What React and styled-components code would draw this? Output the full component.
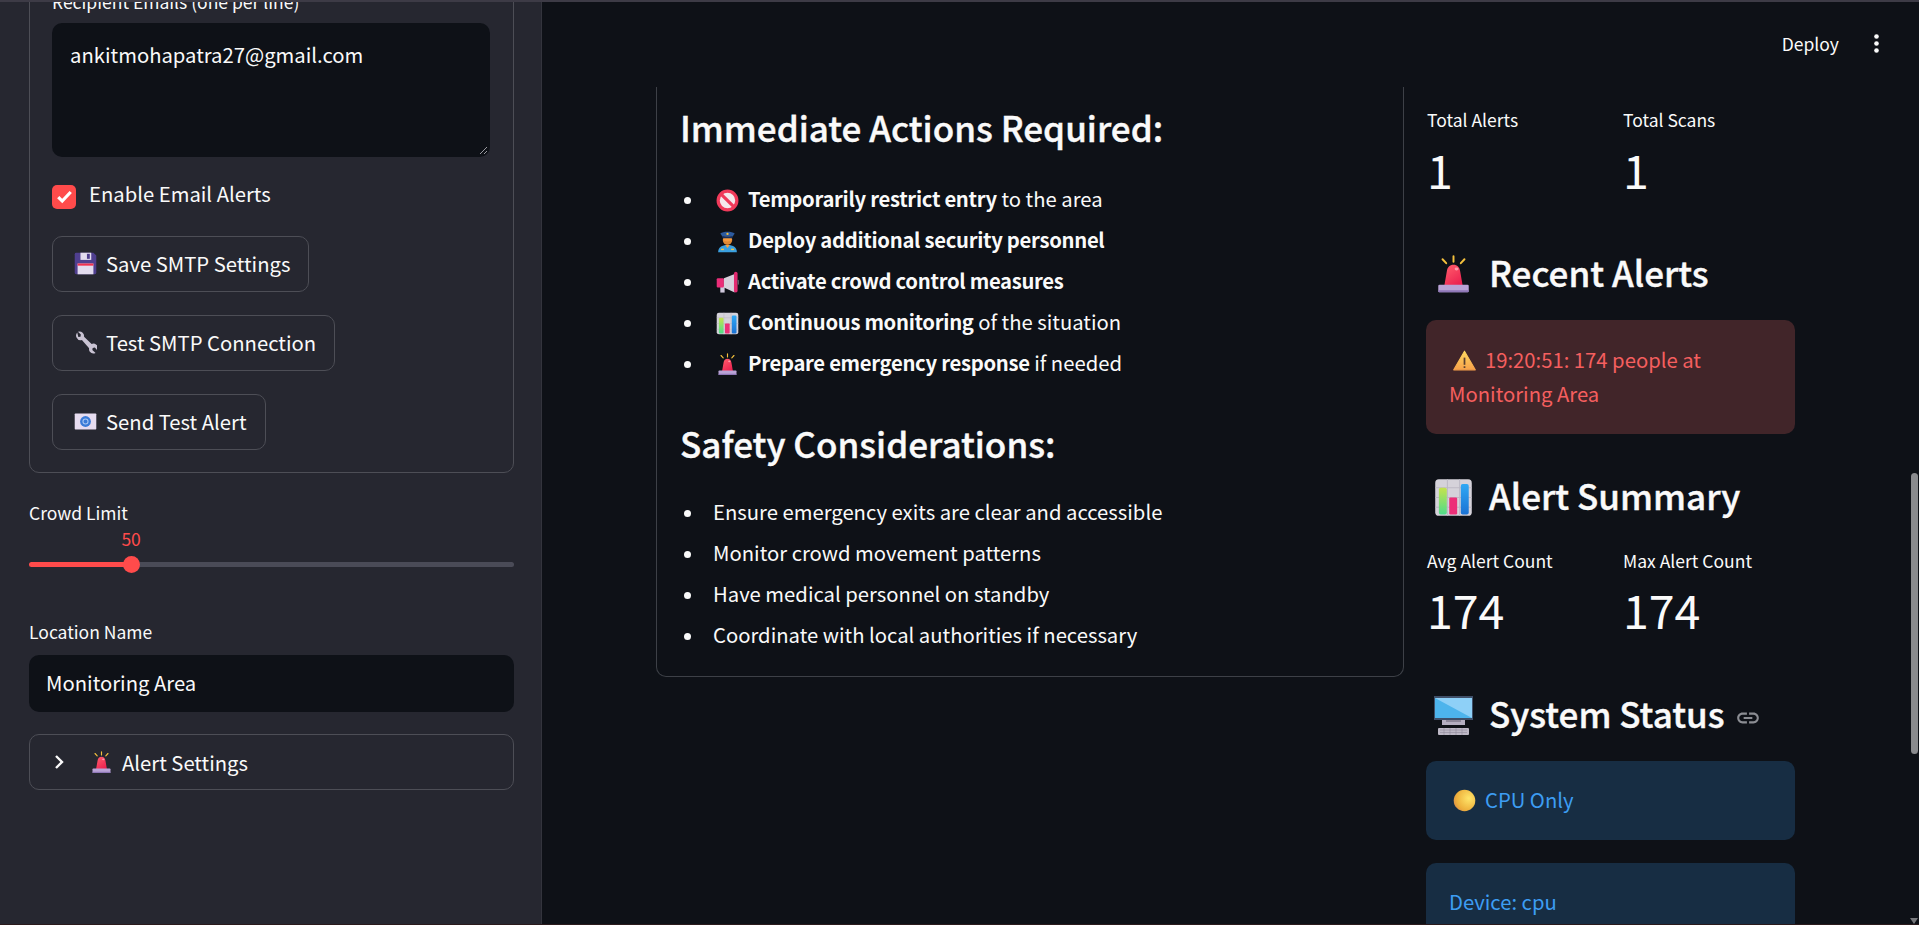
import React from 'react'
import styled, { createGlobalStyle } from 'styled-components'

const GlobalStyle = createGlobalStyle`
  html, body {
    margin: 0;
    padding: 0;
    height: 100%;
    overflow: hidden;
    background: #0e1117;
  }
  body {
    font-family: "Noto Sans CJK SC", "Noto Sans", sans-serif;
    color: #fafafa;
    font-size: 20.25px;
  }
`

const Page = styled.div`
  width: 1919px;
  height: 925px;
  display: flex;
  flex-direction: column;
  overflow: hidden;
`

const TopLine = styled.div`
  height: 2px;
  flex: none;
  background: #3d3b46;
`

const BottomLine = styled.div`
  height: 1px;
  flex: none;
  background: #2b1a1c;
`

const Body = styled.div`
  flex: 1;
  min-height: 0;
  display: flex;
`

/* sidebar */
const Sidebar = styled.aside`
  width: 542px;
  flex: none;
  box-sizing: border-box;
  padding: 0 27px 0 29px;
  background: #262730;
  border-right: 1px solid #33343d;
  overflow: hidden;
  display: flex;
  flex-direction: column;
`

const Panel = styled.div`
  margin-top: -15px;
  box-sizing: border-box;
  height: 486px;
  padding: 0 23px 0 22px;
  border: 1px solid #4d4e56;
  border-radius: 10px;
  display: flex;
  flex-direction: column;
  align-items: flex-start;
`

const FieldLabel = styled.div`
  font-size: 17.5px;
  line-height: 28px;
  height: 28px;
  margin-top: ${p => p.$top || 0}px;
  white-space: nowrap;
`

const TextArea = styled.div`
  position: relative;
  align-self: stretch;
  box-sizing: border-box;
  height: 134px;
  margin-top: 7px;
  padding: 16px 18px;
  background: #0e1117;
  border-radius: 10px;
  line-height: 32px;
`

const ResizeGrip = styled.svg`
  position: absolute;
  right: 2px;
  bottom: 2px;
  width: 9px;
  height: 9px;
`

const CheckRow = styled.div`
  margin-top: 28px;
  height: 23px;
  display: flex;
  align-items: center;
  gap: 13px;
`

const CheckBox = styled.span`
  width: 24px;
  height: 24px;
  border-radius: 5px;
  background: #ff4b4b;
  display: flex;
  align-items: center;
  justify-content: center;
`

const CheckText = styled.span`
  margin-top: -6px;
`

const Button = styled.div`
  box-sizing: border-box;
  height: 56px;
  margin-top: ${p => p.$top}px;
  padding: 0 18px 2px 21px;
  display: inline-flex;
  align-items: center;
  background: #262730;
  border: 1px solid #4d4e56;
  border-radius: 10px;
  white-space: nowrap;
`

const SliderBox = styled.div`
  position: relative;
  height: 50px;
`

const SliderValue = styled.span`
  position: absolute;
  top: 0;
  left: ${p => p.$pct}%;
  transform: translateX(-50%);
  font-size: 17.5px;
  line-height: 24px;
  color: #ff4b4b;
`

const SliderTrack = styled.div`
  position: absolute;
  left: 0;
  right: 0;
  top: 35px;
  height: 5px;
  border-radius: 3px;
  background: linear-gradient(to right, #ff4b4b ${p => p.$pct}%, #4a4b57 ${p => p.$pct}%);
`

const SliderThumb = styled.span`
  position: absolute;
  top: 29px;
  left: ${p => p.$pct}%;
  width: 17px;
  height: 17px;
  margin-left: -8px;
  border-radius: 50%;
  background: #ff4b4b;
`

const TextInput = styled.div`
  box-sizing: border-box;
  height: 57px;
  margin-top: 9px;
  padding: 0 17px 2px;
  display: flex;
  align-items: center;
  background: #0e1117;
  border-radius: 10px;
`

const Expander = styled.div`
  box-sizing: border-box;
  height: 56px;
  margin-top: 22px;
  padding: 0 20px;
  display: flex;
  align-items: center;
  border: 1px solid #4d4e56;
  border-radius: 10px;
`

const Chevron = styled.svg`
  width: 18px;
  height: 18px;
  margin-right: 22px;
`

/* main area */
const Main = styled.main`
  position: relative;
  flex: 1;
  min-width: 0;
  background: #0e1117;
  overflow: hidden;
  display: flex;
  flex-direction: column;
`

const Header = styled.header`
  box-sizing: border-box;
  height: 85px;
  flex: none;
  display: flex;
  align-items: center;
  justify-content: flex-end;
  padding: 0 40px 2px 0;
  gap: 35px;
  font-size: 17.5px;
`

const Kebab = styled.svg`
  width: 5px;
  height: 19px;
`

const Columns = styled.div`
  flex: 1;
  min-height: 0;
  display: flex;
  align-items: flex-start;
  gap: 22px;
  padding-left: 114px;
`

const Card = styled.section`
  box-sizing: border-box;
  width: 748px;
  height: 590px;
  padding: 14px 23px 0;
  border: 1px solid #3d4047;
  border-top: none;
  border-radius: 0 0 10px 10px;
`

const CardTitle = styled.h3`
  margin: ${p => p.$top || 0}px 0 0;
  font-size: 35px;
  line-height: 52px;
  font-weight: 500;
  -webkit-text-stroke: 0.4px #fafafa;
  white-space: nowrap;
`

const BulletList = styled.ul`
  margin: ${p => p.$top}px 0 0;
  padding: 0 0 0 4px;
  list-style: none;
`

const BulletItem = styled.li`
  line-height: 32px;
  height: 32px;
  margin-bottom: ${p => p.$gap}px;
  white-space: nowrap;
  strong {
    font-weight: 600;
    letter-spacing: -0.3px;
  }
  &::before {
    content: '';
    display: inline-block;
    width: 7px;
    height: 7px;
    margin-right: 22px;
    border-radius: 50%;
    background: #fafafa;
    vertical-align: 3px;
  }
`

const InlineEmoji = styled.span`
  display: inline-block;
  width: 23px;
  height: 23px;
  margin-right: 9px;
  vertical-align: -5px;
  svg {
    display: block;
    width: 100%;
    height: 100%;
  }
`

const LeadEmoji = styled(InlineEmoji)`
  margin-left: 3px;
`

const SideColumn = styled.section`
  width: 369px;
  flex: none;
`

const MetricRow = styled.div`
  display: grid;
  grid-template-columns: 196px 173px;
  padding: ${p => p.$top}px 0 0 1px;
`

const MetricLabel = styled.div`
  font-size: 17.5px;
  line-height: 28px;
  white-space: nowrap;
`

const MetricValue = styled.div`
  margin-top: ${p => p.$top}px;
  font-size: 46.5px;
  line-height: 56px;
  font-weight: 400;
`

const SectionHeading = styled.h2`
  margin: ${p => p.$top}px 0 0;
  box-sizing: border-box;
  height: 56px;
  display: flex;
  align-items: center;
  padding-left: 8px;
  font-size: 35px;
  font-weight: 500;
  -webkit-text-stroke: 0.4px #fafafa;
  white-space: nowrap;
  svg.emoji {
    width: 39px;
    height: 39px;
    margin-right: 16px;
    flex: none;
  }
`

const HeadingText = styled.span`
  margin-top: -5px;
`

const LinkIcon = styled.svg`
  width: 26px;
  height: 26px;
  margin: 6px 0 0 10px;
  fill: #8b8d93;
  -webkit-text-stroke: 0;
`

const Notice = styled.div`
  box-sizing: border-box;
  height: ${p => p.$height}px;
  margin-top: ${p => p.$top}px;
  padding: ${p => p.$pad}px 23px 0;
  border-radius: 10px;
  line-height: 34px;
  background: ${p => (p.$tone === 'error' ? '#412529' : '#172d43')};
  color: ${p => (p.$tone === 'error' ? '#f55f5f' : '#3d9df3')};
  ${InlineEmoji} {
    margin: 0 9px 0 4px;
    vertical-align: -4px;
  }
`

const ScrollBar = styled.div`
  position: absolute;
  top: 0;
  right: 0;
  bottom: 0;
  width: 9px;
`

const ScrollThumb = styled.div`
  position: absolute;
  top: 471px;
  left: 1px;
  width: 7px;
  height: 281px;
  border-radius: 4px;
  background: #8a8b8e;
`

const ScrollArrow = styled.div`
  position: absolute;
  bottom: 0;
  left: 0;
  border-left: 4.500px solid transparent;
  border-right: 4.500px solid transparent;
  border-top: 6px solid #77787c;
`

/* emoji drawings */
const Siren = ({ className }) => (
  <svg className={className} viewBox="0 0 32 32">
    <defs>
      <linearGradient id="sirenDome" x1="0.2" y1="0" x2="0.8" y2="1">
        <stop offset="0" stopColor="#ff5a6a" />
        <stop offset="1" stopColor="#ea1f4f" />
      </linearGradient>
    </defs>
    <path d="M16 1v4.500M7 3.500l3 3.200M25 3.500l-3 3.200" stroke="#f4c13d" strokeWidth="1.600" strokeLinecap="round" fill="none" />
    <path d="M8.500 25l2-11.500C11 10 13 8 16 8s5 2 5.500 5.500l2 11.500z" fill="url(#sirenDome)" />
    <ellipse cx="18.500" cy="11.500" rx="1.600" ry="1.200" fill="#ff9aa8" />
    <rect x="3.500" y="24.500" width="25" height="6" rx="1" fill="#b9a3d6" />
    <rect x="3.500" y="29" width="25" height="1.500" rx="0.700" fill="#8f78b8" />
  </svg>
)

const BarChart = ({ className }) => (
  <svg className={className} viewBox="0 0 32 32">
    <defs>
      <linearGradient id="barGreen" x1="0" y1="0" x2="0" y2="1">
        <stop offset="0" stopColor="#c5e24e" />
        <stop offset="1" stopColor="#4fdc8a" />
      </linearGradient>
      <linearGradient id="barBlue" x1="0" y1="0" x2="0" y2="1">
        <stop offset="0" stopColor="#2fa8f4" />
        <stop offset="1" stopColor="#1a72d4" />
      </linearGradient>
    </defs>
    <rect x="1" y="1" width="30" height="30" rx="3" fill="#d5d2da" />
    <path d="M11 1v30M21 1v30M1 8h30M1 16h30M1 24h30" stroke="#bcb8c4" strokeWidth="0.800" />
    <rect x="4" y="8" width="6.500" height="22" rx="1.500" fill="url(#barGreen)" />
    <rect x="12.500" y="16" width="6.500" height="14" rx="1" fill="#ec2f78" />
    <rect x="22" y="5" width="6.500" height="25" rx="1.500" fill="url(#barBlue)" />
  </svg>
)

const NoEntry = () => (
  <svg viewBox="0 0 32 32">
    <circle cx="16" cy="16" r="13" fill="#f5e8ec" stroke="#f03a5a" strokeWidth="4.500" />
    <path d="M7 7l18 18" stroke="#f03a5a" strokeWidth="4.500" />
  </svg>
)

const Police = () => (
  <svg viewBox="0 0 32 32">
    <path d="M3 31c0-7 5-10 13-10s13 3 13 10z" fill="#3aa0e0" />
    <path d="M13 21l3 4 3-4z" fill="#f7a13a" />
    <rect x="7" y="26" width="4" height="2" fill="#f4c13d" />
    <rect x="21" y="26" width="4" height="2" fill="#f4c13d" />
    <circle cx="16" cy="14" r="6.500" fill="#f59a3e" />
    <path d="M9.500 13c0 5 3 8 6.500 8s6.500-3 6.500-8c-1 2-3 3-6.500 3s-5.500-1-6.500-3z" fill="#c9772a" opacity="0.500" />
    <path d="M6 5c4-3.500 16-3.500 20 0l-3 4.500H9z" fill="#2c5a9e" />
    <rect x="9" y="9" width="14" height="2.500" fill="#18305c" />
    <circle cx="16" cy="5.500" r="1.600" fill="#f4c13d" />
  </svg>
)

const Megaphone = () => (
  <svg viewBox="0 0 32 32">
    <rect x="6" y="21" width="6" height="9" fill="#cfc8dc" />
    <rect x="1" y="10" width="10" height="13" rx="1.500" fill="#ea2d78" />
    <path d="M11 10L26 4v26l-15-7z" fill="#d6d1dc" />
    <rect x="25" y="1" width="5" height="29" rx="2.500" fill="#e22a70" />
    <rect x="30" y="12" width="2" height="7" rx="1" fill="#5c5a66" />
  </svg>
)

const Floppy = () => (
  <svg viewBox="0 0 32 32">
    <path d="M3 1h24l4 4v24a2 2 0 0 1-2 2H3a2 2 0 0 1-2-2V3a2 2 0 0 1 2-2z" fill="#4f3f8f" />
    <rect x="9" y="1" width="15" height="10" fill="#e3dcef" />
    <rect x="18" y="2.500" width="4" height="7" fill="#4f3f8f" />
    <rect x="5" y="16" width="22" height="15" fill="#e3dcef" />
    <rect x="5" y="16" width="22" height="3" fill="#f0304f" />
  </svg>
)

const Wrench = () => (
  <svg viewBox="0 0 32 32">
    <path d="M4.500 2a6.500 6.500 0 0 0-1 7 6.500 6.500 0 0 0 7.500 3.500L21 24a6.500 6.500 0 0 0 1 5 6.500 6.500 0 0 0 8 1.500l-4.500-4 .5-3 3-.5 3.500 4a6.500 6.500 0 0 0-1.500-8 6.500 6.500 0 0 0-6.500-1L14 8a6.500 6.500 0 0 0-2-5.500A6.500 6.500 0 0 0 5.500 1l4 4-.5 3-3 .5z" fill="#c9c3d3" />
  </svg>
)

const Envelope = () => (
  <svg viewBox="0 0 32 32">
    <rect x="1" y="5" width="30" height="22" rx="1" fill="#e6dcf0" />
    <circle cx="16" cy="16" r="7.500" fill="#3a7bd8" />
    <circle cx="16" cy="16" r="3.500" fill="none" stroke="#a9c6f2" strokeWidth="1.500" />
  </svg>
)

const Warning = () => (
  <svg viewBox="0 0 32 32">
    <defs>
      <linearGradient id="warnFill" x1="0" y1="0" x2="0" y2="1">
        <stop offset="0" stopColor="#ffd860" />
        <stop offset="1" stopColor="#f7a14a" />
      </linearGradient>
    </defs>
    <path d="M16 3L31 29H1z" fill="url(#warnFill)" strokeLinejoin="round" stroke="url(#warnFill)" strokeWidth="1.500" />
    <rect x="14.800" y="12" width="2.400" height="10" fill="#5a4030" />
    <rect x="14.800" y="24" width="2.400" height="2.400" fill="#5a4030" />
  </svg>
)

const YellowDot = () => (
  <svg viewBox="0 0 32 32">
    <defs>
      <radialGradient id="dotFill" cx="0.7" cy="0.4" r="0.8">
        <stop offset="0" stopColor="#ffe56a" />
        <stop offset="0.700" stopColor="#eeb13c" />
        <stop offset="1" stopColor="#d98a4a" />
      </radialGradient>
    </defs>
    <circle cx="16" cy="16" r="15" fill="url(#dotFill)" />
  </svg>
)

const Desktop = ({ className }) => (
  <svg className={className} viewBox="0 0 39 39">
    <rect x="0" y="0" width="39" height="24" fill="#3f4f68" />
    <rect x="1" y="2" width="37" height="20" fill="#4db4ec" />
    <path d="M1 2h37v20z" fill="#8ed0f7" />
    <rect x="8" y="24" width="23" height="5" fill="#b4aec0" />
    <rect x="12" y="24" width="15" height="2" fill="#8c8698" />
    <rect x="4" y="32" width="31" height="7" rx="1" fill="#bdb8c6" />
    <path d="M6 34h27M6 36.500h27M10 32v7M16 32v7M22 32v7M28 32v7" stroke="#918b9c" strokeWidth="0.600" />
  </svg>
)

const Emoji = ({ children }) => <InlineEmoji>{children}</InlineEmoji>

const sliderPct = ((50 - 10) / (200 - 10)) * 100

export default function App() {
  return (
    <Page>
      <GlobalStyle />
      <TopLine />
      <Body>
        <Sidebar>
          <Panel>
            <FieldLabel>Recipient Emails (one per line)</FieldLabel>
            <TextArea>
              ankitmohapatra27@gmail.com
              <ResizeGrip viewBox="0 0 9 9">
                <path d="M1 8l7-7M5 8l3-3" stroke="#9a9aa0" strokeWidth="1" />
              </ResizeGrip>
            </TextArea>
            <CheckRow>
              <CheckBox>
                <svg width="17" height="17" viewBox="0 0 15 15">
                  <path d="M2 8l3.500 3.500L13 3.500" stroke="#fff" strokeWidth="2.800" fill="none" />
                </svg>
              </CheckBox>
              <CheckText>Enable Email Alerts</CheckText>
            </CheckRow>
            <Button $top={28}><Emoji><Floppy /></Emoji>Save SMTP Settings</Button>
            <Button $top={23}><Emoji><Wrench /></Emoji>Test SMTP Connection</Button>
            <Button $top={23}><Emoji><Envelope /></Emoji>Send Test Alert</Button>
          </Panel>

          <FieldLabel $top={26}>Crowd Limit</FieldLabel>
          <SliderBox>
            <SliderValue $pct={sliderPct}>50</SliderValue>
            <SliderTrack $pct={sliderPct} />
            <SliderThumb $pct={sliderPct} />
          </SliderBox>

          <FieldLabel $top={41}>Location Name</FieldLabel>
          <TextInput>Monitoring Area</TextInput>
          <Expander>
            <Chevron viewBox="0 0 18 18">
              <path d="M6 3l6 6-6 6" stroke="#fafafa" strokeWidth="2.400" fill="none" />
            </Chevron>
            <Emoji><Siren /></Emoji>
            Alert Settings
          </Expander>
        </Sidebar>

        <Main>
          <Header>
            <span>Deploy</span>
            <Kebab viewBox="0 0 5 19">
              <circle cx="2.500" cy="2.500" r="2.300" fill="#fafafa" />
              <circle cx="2.500" cy="9.500" r="2.300" fill="#fafafa" />
              <circle cx="2.500" cy="16.500" r="2.300" fill="#fafafa" />
            </Kebab>
          </Header>

          <Columns>
            <Card>
              <CardTitle>Immediate Actions Required:</CardTitle>
              <BulletList $top={29.5}>
                <BulletItem $gap={9}><LeadEmoji><NoEntry /></LeadEmoji><strong>Temporarily restrict entry</strong> to the area</BulletItem>
                <BulletItem $gap={9}><LeadEmoji><Police /></LeadEmoji><strong>Deploy additional security personnel</strong></BulletItem>
                <BulletItem $gap={9}><LeadEmoji><Megaphone /></LeadEmoji><strong>Activate crowd control measures</strong></BulletItem>
                <BulletItem $gap={9}><LeadEmoji><BarChart /></LeadEmoji><strong>Continuous monitoring</strong> of the situation</BulletItem>
                <BulletItem $gap={9}><LeadEmoji><Siren /></LeadEmoji><strong>Prepare emergency response</strong> if needed</BulletItem>
              </BulletList>
              <CardTitle $top={38}>Safety Considerations:</CardTitle>
              <BulletList $top={27.5}>
                <BulletItem $gap={9}>Ensure emergency exits are clear and accessible</BulletItem>
                <BulletItem $gap={9}>Monitor crowd movement patterns</BulletItem>
                <BulletItem $gap={9}>Have medical personnel on standby</BulletItem>
                <BulletItem $gap={9}>Coordinate with local authorities if necessary</BulletItem>
              </BulletList>
            </Card>

            <SideColumn>
              <MetricRow $top={19}>
                <div>
                  <MetricLabel>Total Alerts</MetricLabel>
                  <MetricValue $top={7}>1</MetricValue>
                </div>
                <div>
                  <MetricLabel>Total Scans</MetricLabel>
                  <MetricValue $top={7}>1</MetricValue>
                </div>
              </MetricRow>

              <SectionHeading $top={49}><Siren className="emoji" /><HeadingText>Recent Alerts</HeadingText></SectionHeading>
              <Notice $tone="error" $top={18} $height={114} $pad={23}>
                <Emoji><Warning /></Emoji>19:20:51: 174 people at Monitoring Area
              </Notice>

              <SectionHeading $top={35}><BarChart className="emoji" /><HeadingText>Alert Summary</HeadingText></SectionHeading>
              <MetricRow $top={22}>
                <div>
                  <MetricLabel>Avg Alert Count</MetricLabel>
                  <MetricValue $top={6}>174</MetricValue>
                </div>
                <div>
                  <MetricLabel>Max Alert Count</MetricLabel>
                  <MetricValue $top={6}>174</MetricValue>
                </div>
              </MetricRow>

              <SectionHeading $top={50}>
                <Desktop className="emoji" /><HeadingText>System Status</HeadingText>
                <LinkIcon viewBox="0 0 24 24">
                  <path d="M3.900 12c0-1.710 1.390-3.100 3.100-3.100h4V7H7c-2.760 0-5 2.240-5 5s2.240 5 5 5h4v-1.900H7c-1.710 0-3.100-1.390-3.100-3.100zM8 13h8v-2H8v2zm9-6h-4v1.900h4c1.710 0 3.100 1.390 3.100 3.100s-1.390 3.100-3.100 3.100h-4V17h4c2.760 0 5-2.240 5-5s-2.240-5-5-5z" />
                </LinkIcon>
              </SectionHeading>
              <Notice $top={18} $height={79} $pad={22}>
                <Emoji><YellowDot /></Emoji>CPU Only
              </Notice>
              <Notice $top={23} $height={120} $pad={22}>Device: cpu</Notice>
            </SideColumn>
          </Columns>

          <ScrollBar>
            <ScrollThumb />
            <ScrollArrow />
          </ScrollBar>
        </Main>
      </Body>
      <BottomLine />
    </Page>
  )
}
